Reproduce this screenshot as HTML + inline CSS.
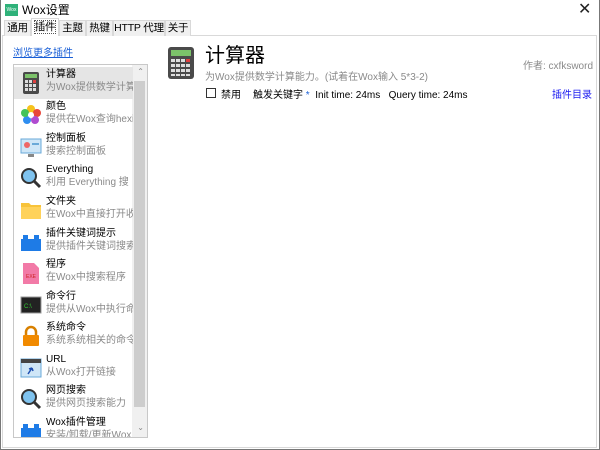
<!DOCTYPE html><html><head><meta charset="utf-8"><style>
*{margin:0;padding:0;box-sizing:border-box}
body{width:600px;height:450px;background:#fff;font-family:"Liberation Sans","Noto Sans CJK SC",sans-serif;position:relative;overflow:hidden;font-size:11px;color:#000}
.a{position:absolute;white-space:nowrap}
.tab{position:absolute;top:20px;height:16px;background:#f0f0f0;border:1px solid #d9d9d9;border-bottom:none;font-size:10.5px;line-height:14px;text-align:center;white-space:nowrap;overflow:hidden;letter-spacing:-0.2px}
.item{position:absolute;left:14px;width:119px;height:31.6px;overflow:hidden;white-space:nowrap}
.item .t{position:absolute;left:32px;top:2px;font-size:10px;line-height:12px}
.item .d{position:absolute;left:32px;top:15px;font-size:10px;line-height:12px;color:#8a8a8a}
.item .ic{position:absolute;left:6px;top:5px;width:22px;height:22px}
</style></head><body>
<div class="a" style="left:0;top:0;width:600px;height:450px;border:1px solid #777;border-top:none"></div>
<div class="a" style="left:5px;top:4px;width:13px;height:12px;background:#2fb27a;color:#fff;font-size:5px;line-height:12px;text-align:center">Wox</div>
<div class="a" style="left:22px;top:2px;font-size:12px;line-height:16px">Wox设置</div>
<div class="a" style="left:578px;top:0px;font-size:16px;line-height:20px;color:#222">✕</div>
<div class="a" style="left:2px;top:35px;width:595px;height:413px;border:1px solid #d9d9d9;background:#fff"></div>
<div class="tab" style="left:4px;width:27px">通用</div>
<div class="tab" style="left:31px;top:18px;height:18px;width:28px;background:#fff;z-index:2;line-height:17px"><span style="outline:1px dotted #555">插件</span></div>
<div class="tab" style="left:59px;width:27px">主题</div>
<div class="tab" style="left:86px;width:27px">热键</div>
<div class="tab" style="left:113px;width:52px">HTTP 代理</div>
<div class="tab" style="left:165px;width:26px">关于</div>
<div class="a" style="left:13px;top:44px;font-size:10px;color:#1a5fd6;text-decoration:underline">浏览更多插件</div>
<div class="a" style="left:13px;top:64px;width:135px;height:374px;border:1px solid #c8c8c8;background:#fff;overflow:hidden">
<div class="a" style="right:0;top:0;width:15px;height:372px;background:#f0f0f0"></div>
<div class="a" style="right:2px;top:16px;width:11px;height:326px;background:#cdcdcd"></div>
<div class="a" style="right:3px;top:2px;font-size:8px;color:#888">⌃</div>
<div class="a" style="right:3px;top:358px;font-size:8px;color:#888">⌄</div>
<div class="a" style="left:0;top:2px;width:119px;height:32px;background:#e5e5e5"></div>
</div>
<svg class="a" style="left:168px;top:47px" width="26" height="32" viewBox="0 0 26 32"><rect width="26" height="32" rx="3" fill="#4a4a4a"/><rect x="3" y="3" width="20" height="6" fill="#7cc26a"/><g fill="#ddd"><rect x="3" y="12" width="4" height="3"/><rect x="8" y="12" width="4" height="3"/><rect x="13" y="12" width="4" height="3"/><rect x="3" y="17" width="4" height="3"/><rect x="8" y="17" width="4" height="3"/><rect x="13" y="17" width="4" height="3"/><rect x="3" y="22" width="4" height="3"/><rect x="8" y="22" width="4" height="3"/><rect x="13" y="22" width="4" height="3"/><rect x="3" y="27" width="4" height="2"/><rect x="8" y="27" width="4" height="2"/><rect x="13" y="27" width="4" height="2"/><rect x="18" y="17" width="4" height="3"/><rect x="18" y="22" width="4" height="3"/><rect x="18" y="27" width="4" height="2"/></g><rect x="18" y="12" width="4" height="3" fill="#e04040"/></svg>
<div class="a" style="left:205px;top:44px;font-size:20px;line-height:24px">计算器</div>
<div class="a" style="left:205px;top:68px;font-size:10px;color:#8a8a8a">为Wox提供数学计算能力。(试着在Wox输入 5*3-2)</div>
<div class="a" style="left:523px;top:57px;font-size:10px;color:#8a8a8a">作者: cxfksword</div>
<div class="a" style="left:206px;top:88px;width:10px;height:10px;border:1px solid #333"></div>
<div class="a" style="left:221px;top:86px;font-size:10px">禁用</div>
<div class="a" style="left:253px;top:86px;font-size:10px">触发关键字 <span style="color:#1a5fd6">*</span>&nbsp; Init time: 24ms&nbsp;&nbsp; Query time: 24ms</div>
<div class="a" style="left:552px;top:86px;font-size:10px;color:#1a1af0">插件目录</div>

<div class="item" style="top:67px"><svg class="ic" viewBox="0 0 22 22"><rect x="3" width="16" height="22" rx="2" fill="#4a4a4a"/><rect x="5" y="2" width="12" height="4" fill="#7cc26a"/><g fill="#ddd"><rect x="5" y="8" width="3" height="3"/><rect x="9" y="8" width="3" height="3"/><rect x="5" y="12" width="3" height="3"/><rect x="9" y="12" width="3" height="3"/><rect x="13" y="12" width="3" height="3"/><rect x="5" y="16" width="3" height="3"/><rect x="9" y="16" width="3" height="3"/><rect x="13" y="16" width="3" height="3"/></g><rect x="13" y="8" width="3" height="3" fill="#e04040"/></svg><div class="t">计算器</div><div class="d">为Wox提供数学计算</div></div>
<div class="item" style="top:99px"><svg class="ic" viewBox="0 0 22 22"><circle cx="11" cy="5" r="4" fill="#f6c21c"/><circle cx="17" cy="9" r="4" fill="#e8463a"/><circle cx="15" cy="16" r="4" fill="#b04bd0"/><circle cx="7" cy="16" r="4" fill="#2f8ef0"/><circle cx="5" cy="9" r="4" fill="#43c35a"/><circle cx="11" cy="11" r="3" fill="#fff"/></svg><div class="t">颜色</div><div class="d">提供在Wox查询hexi</div></div>
<div class="item" style="top:131px"><svg class="ic" viewBox="0 0 22 22"><rect x="1" y="3" width="20" height="14" fill="#cfe6f7" stroke="#6aa9d8"/><circle cx="7" cy="9" r="3" fill="#e66"/><rect x="12" y="7" width="7" height="2" fill="#6aa9d8"/><rect x="8" y="18" width="6" height="3" fill="#888"/></svg><div class="t">控制面板</div><div class="d">搜索控制面板</div></div>
<div class="item" style="top:162px"><svg class="ic" viewBox="0 0 22 22"><circle cx="9" cy="9" r="7" fill="#7fc3ef" stroke="#333" stroke-width="2"/><path d="M14 14l6 6" stroke="#333" stroke-width="3"/></svg><div class="t">Everything</div><div class="d">利用 Everything 搜</div></div>
<div class="item" style="top:194px"><svg class="ic" viewBox="0 0 22 22"><path d="M1 4h8l2 2h10v14H1z" fill="#f8c33a"/><rect x="1" y="8" width="20" height="12" fill="#ffd25a"/></svg><div class="t">文件夹</div><div class="d">在Wox中直接打开收</div></div>
<div class="item" style="top:226px"><svg class="ic" viewBox="0 0 22 22"><rect x="1" y="8" width="20" height="12" fill="#1e7be6"/><rect x="3" y="4" width="5" height="4" fill="#1e7be6"/><rect x="14" y="4" width="5" height="4" fill="#1e7be6"/></svg><div class="t">插件关键词提示</div><div class="d">提供插件关键词搜索</div></div>
<div class="item" style="top:257px"><svg class="ic" viewBox="0 0 22 22"><path d="M3 1h11l5 5v16H3z" fill="#f27aa7"/><text x="6" y="16" font-size="5" fill="#c22">EXE</text></svg><div class="t">程序</div><div class="d">在Wox中搜索程序</div></div>
<div class="item" style="top:289px"><svg class="ic" viewBox="0 0 22 22"><rect x="1" y="3" width="20" height="16" fill="#222" stroke="#999"/><text x="4" y="14" font-size="6" fill="#3c3">C:\</text></svg><div class="t">命令行</div><div class="d">提供从Wox中执行命</div></div>
<div class="item" style="top:320px"><svg class="ic" viewBox="0 0 22 22"><path d="M6 10V7a5 5 0 0110 0v3" stroke="#d88000" stroke-width="2.5" fill="none"/><rect x="3" y="10" width="16" height="11" rx="1" fill="#f18a00"/></svg><div class="t">系统命令</div><div class="d">系统系统相关的命令</div></div>
<div class="item" style="top:352px"><svg class="ic" viewBox="0 0 22 22"><rect x="1" y="2" width="20" height="18" fill="#cfe6f7" stroke="#6aa9d8"/><rect x="1" y="2" width="20" height="4" fill="#444"/><path d="M8 17l4-6m0 0l-3 1m3-1l1 3" stroke="#1e4fb0" stroke-width="1.5" fill="none"/></svg><div class="t">URL</div><div class="d">从Wox打开链接</div></div>
<div class="item" style="top:383px"><svg class="ic" viewBox="0 0 22 22"><circle cx="9" cy="9" r="7" fill="#7fc3ef" stroke="#333" stroke-width="2"/><path d="M14 14l6 6" stroke="#333" stroke-width="3"/></svg><div class="t">网页搜索</div><div class="d">提供网页搜索能力</div></div>
<div class="item" style="top:415px;height:22px"><svg class="ic" viewBox="0 0 22 22"><rect x="1" y="8" width="20" height="14" fill="#1e7be6"/><rect x="3" y="4" width="5" height="4" fill="#1e7be6"/><rect x="14" y="4" width="5" height="4" fill="#1e7be6"/></svg><div class="t">Wox插件管理</div><div class="d">安装/卸载/更新Wox</div></div>
</body></html>
